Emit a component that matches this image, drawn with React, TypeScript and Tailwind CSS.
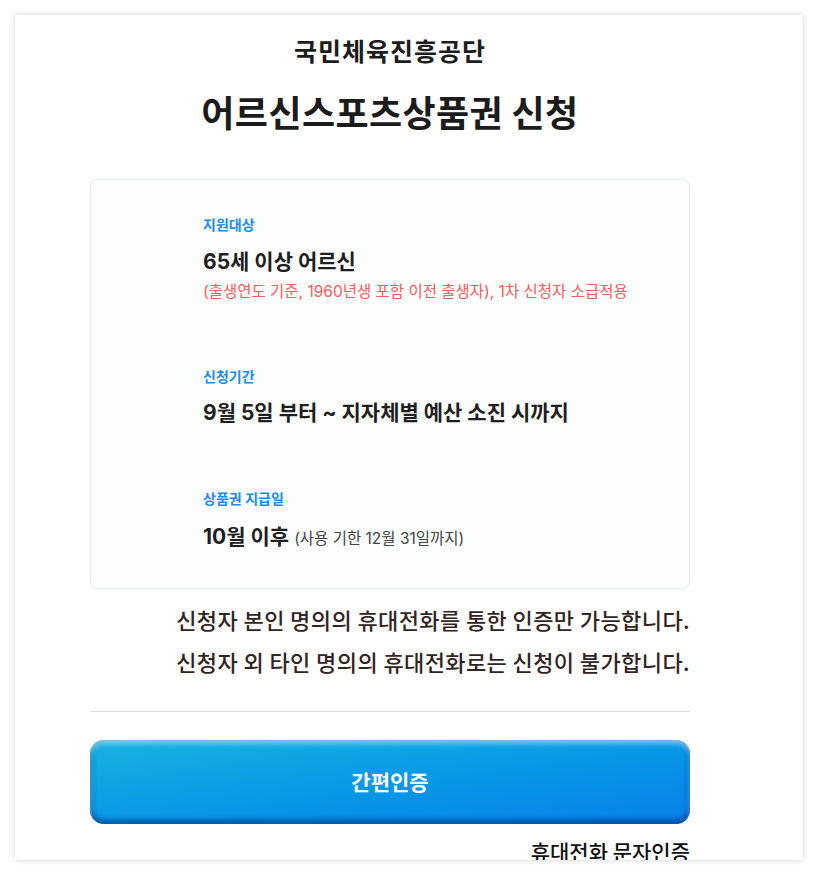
import React from 'react';

const font = { fontFamily: '"Noto Sans CJK KR", "Noto Sans", sans-serif' };
const infoFont = { fontFamily: 'Inter, "Noto Sans CJK KR", sans-serif' };

const App: React.FC = () => {
    return (
        <div className="min-h-screen bg-white p-[15px]" style={font}>
            <div className="w-[788px] h-[845px] overflow-hidden bg-white shadow-[0_0_6px_rgba(0,0,0,0.18)]">
                <div className="ml-[75px] w-[600px] pt-[19px]">
                    {/* Header */}
                    <h2 className="text-center text-[25px] leading-[32px] font-bold text-[#1c1c1c] tracking-[1px]">
                        국민체육진흥공단
                    </h2>
                    <h1 className="mt-[20px] text-center text-[36px] leading-[50px] font-bold text-[#1c1c1c] tracking-[0.4px]">
                        어르신스포츠상품권 신청
                    </h1>

                    {/* Info box */}
                    <div
                        className="mt-[43px] rounded-lg border border-[#e6e8ea] bg-[#fcfdfd] pl-[112px] pt-[35px] pb-[34px]"
                        style={infoFont}
                    >
                        <p className="text-[14px] leading-[20px] font-semibold text-[#1a8cf0]">지원대상</p>
                        <p className="mt-[12px] text-[21px] leading-[30px] font-bold text-[#1f1f1f]">65세 이상 어르신</p>
                        <p className="mt-[3px] text-[15.5px] leading-[24px] text-[#ff5a5a]">
                            (출생연도 기준, 1960년생 포함 이전 출생자), 1차 신청자 소급적용
                        </p>

                        <p className="mt-[63px] text-[14px] leading-[20px] font-semibold text-[#1a8cf0]">신청기간</p>
                        <p className="mt-[11px] text-[21px] leading-[30px] font-bold text-[#1f1f1f]">
                            9월 5일 부터 ~ 지자체별 예산 소진 시까지
                        </p>

                        <p className="mt-[61px] text-[14px] leading-[20px] font-semibold text-[#1a8cf0]">상품권 지급일</p>
                        <p className="mt-[13px] text-[21px] leading-[30px] font-bold text-[#1f1f1f]">
                            10월 이후{' '}
                            <span className="text-[15.5px] font-normal text-[#444]">(사용 기한 12월 31일까지)</span>
                        </p>
                    </div>

                    {/* Notice */}
                    <div className="mt-[9px] text-right text-[22px] leading-[42px] font-medium text-[#33241f] tracking-[0.4px]">
                        <p>신청자 본인 명의의 휴대전화를 통한 인증만 가능합니다.</p>
                        <p>신청자 외 타인 명의의 휴대전화로는 신청이 불가합니다.</p>
                    </div>

                    <div className="mt-[29px] h-px bg-[#dddddd]" />

                    {/* Buttons */}
                    <button
                        type="button"
                        className="mt-[28px] flex h-[84px] w-full items-center justify-center rounded-[14px] bg-gradient-to-br from-[#19b1e1] to-[#0880ea] text-[21px] font-bold text-white shadow-[inset_0_4px_5px_rgba(255,255,255,0.45),inset_0_-5px_5px_rgba(0,40,120,0.45),inset_4px_0_5px_rgba(0,60,140,0.2),inset_-4px_0_5px_rgba(0,60,140,0.2)]"
                    >
                        간편인증
                    </button>
                    <p className="mt-[12px] text-right text-[21px] leading-[30px] font-medium text-[#111]">
                        휴대전화 문자인증
                    </p>
                </div>
            </div>
        </div>
    );
};

export default App;
